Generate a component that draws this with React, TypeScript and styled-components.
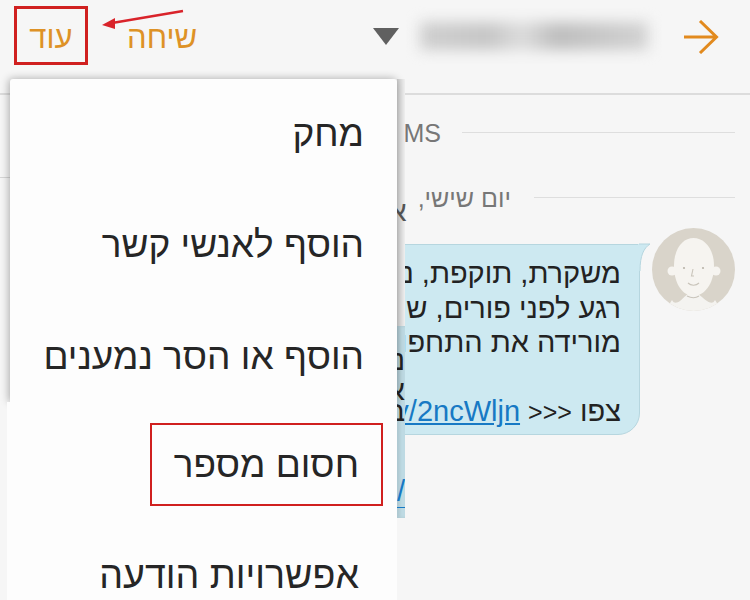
import React from "react";
import styled, { createGlobalStyle } from "styled-components";

const Global = createGlobalStyle`
  html, body { margin: 0; padding: 0; background: #f6f6f6; }
  body { width: 750px; height: 600px; overflow: hidden; font-family: "Liberation Sans", "DejaVu Sans", sans-serif; }
`;

const Screen = styled.div`
  position: relative;
  width: 750px;
  height: 600px;
  overflow: hidden;
  background: #f6f6f6;
`;

const Header = styled.header`
  height: 95px;
  box-sizing: border-box;
  border-bottom: 2px solid #dcdcdc;
  display: flex;
  align-items: flex-start;
  direction: ltr;
  padding: 6px 30px 0 14px;
  background: #f6f6f6;
`;

const HeaderAction = styled.div<{ $boxed?: boolean }>`
  box-sizing: border-box;
  width: ${(p) => (p.$boxed ? "74px" : "auto")};
  height: 59px;
  display: flex;
  align-items: center;
  justify-content: center;
  margin-left: ${(p) => (p.$boxed ? "0" : "39px")};
  padding-top: ${(p) => (p.$boxed ? "4px" : "3px")};
  border: ${(p) => (p.$boxed ? "3px solid #d0201f" : "none")};
  color: #de9226;
  font-size: 31px;
  line-height: 1;
`;

const Caret = styled.div`
  width: 0;
  height: 0;
  margin: 22px 0 0 176px;
  border-left: 13px solid transparent;
  border-right: 13px solid transparent;
  border-top: 17px solid #606060;
`;

const BlurName = styled.div`
  width: 228px;
  height: 28px;
  margin: 16px 0 0 21px;
  background: linear-gradient(90deg, #cfcfcf, #c6c6c6 30%, #dcdcdc 45%, #bebebe 60%, #d2d2d2);
  filter: blur(7px);
`;

const BackArrow = styled.svg`
  width: 36px;
  height: 34px;
  margin: 14px 0 0 35px;
  flex: none;
`;

const Chat = styled.main`
  display: flex;
  flex-direction: column;
  align-items: stretch;
  padding: 26px 15px 0 0;
`;

const DateRow = styled.div`
  display: flex;
  align-items: center;
  height: 24px;
  direction: ltr;
`;

const DateLabel = styled.span<{ $width: number }>`
  flex: none;
  width: ${(p) => p.$width}px;
  direction: rtl;
  text-align: right;
  color: #777;
  font-size: 25px;
  white-space: nowrap;
`;

const DateLine = styled.span<{ $inset: number }>`
  flex: 1;
  height: 1px;
  margin: -2px 0 0 ${(p) => p.$inset}px;
  background: #dedede;
`;

const Divider = styled.div`
  width: 405px;
  height: 1px;
  margin: 32px 0 8px;
  background: #d6d6d6;
`;

const Message = styled.div`
  display: flex;
  direction: ltr;
  align-items: flex-start;
  justify-content: flex-end;
  margin-top: 18px;
`;

const Bubble = styled.div`
  box-sizing: border-box;
  width: 440px;
  height: 191px;
  margin: 16px 12px 0 0;
  padding: 11px 18px 0 0;
  background: #cde9f1;
  border: 1px solid #b6d6df;
  border-radius: 0 0 22px 0;
  direction: rtl;
  color: #222;
  font-size: 29px;
  line-height: 34.5px;
  white-space: nowrap;
  overflow: hidden;
`;

const Chevrons = styled.span`
  font-size: 25px;
`;

const Tail = styled.svg`
  position: absolute;
  left: 638px;
  top: 243px;
`;

const BubbleLink = styled.a`
  color: #1779c4;
  text-decoration: underline;
  direction: ltr;
  unicode-bidi: embed;
`;

const Avatar = styled.svg`
  flex: none;
  width: 83px;
  height: 83px;
`;

const RedArrow = styled.svg`
  position: absolute;
  left: 100px;
  top: 8px;
`;

const ShadowStrip = styled.div`
  position: absolute;
  left: 397px;
  top: 79px;
  width: 8px;
  height: 247px;
  background: linear-gradient(90deg, #cfcfcf, #efefef);
`;

const PeekGlyph = styled.span`
  position: absolute;
  left: 389px;
  top: 198px;
  color: #555;
  font-size: 28px;
  line-height: 28px;
`;

const Menu = styled.div`
  position: absolute;
  left: 10px;
  top: 79px;
  width: 387px;
  height: 323px;
  background: #fdfdfd;
  border-radius: 3px 3px 0 0;
  box-shadow: -1px 0 9px rgba(0, 0, 0, 0.32);
  direction: rtl;
`;

const MenuLower = styled.div`
  position: absolute;
  left: 7px;
  top: 402px;
  width: 390px;
  height: 198px;
  overflow: hidden;
  background: #fdfdfd;
  direction: rtl;
`;

const MenuItem = styled.div<{ $right: number; $height: number; $size?: number }>`
  height: ${(p) => p.$height}px;
  display: flex;
  align-items: center;
  padding-right: ${(p) => p.$right}px;
  color: #262626;
  font-size: ${(p) => p.$size ?? 37}px;
  white-space: nowrap;
`;

const BlockBox = styled.div`
  position: absolute;
  left: 150px;
  top: 423px;
  width: 233px;
  height: 83px;
  box-sizing: border-box;
  border: 2px solid #d0201f;
`;

const Strip = styled.div`
  position: absolute;
  left: 397px;
  top: 326px;
  width: 8px;
  height: 192px;
  background: #bedae3;
  overflow: hidden;
  box-shadow: inset 3px 0 3px rgba(0, 0, 0, 0.08);
  direction: rtl;
  font-size: 29px;
`;

const StripText = styled.div<{ $h: number }>`
  height: ${(p) => p.$h}px;
  line-height: ${(p) => p.$h}px;
  color: #222;
  white-space: nowrap;
`;

const StripLink = styled.div`
  margin-top: 58px;
  height: 32px;
  line-height: 32px;
  color: #1779c4;
  border-bottom: 1px solid #1779c4;
  direction: ltr;
`;

export default function App() {
  return (
    <Screen>
      <Global />
      <Header>
        <HeaderAction $boxed>עוד</HeaderAction>
        <HeaderAction>שיחה</HeaderAction>
        <Caret />
        <BlurName />
        <BackArrow viewBox="0 0 36 34" fill="none" stroke="#e28a1e" strokeWidth="3">
          <path d="M1 17H34M17 1L33.5 17L17 33" />
        </BackArrow>
      </Header>
      <Chat>
        <DateRow>
          <DateLabel $width={441}>SMS</DateLabel>
          <DateLine $inset={21} />
        </DateRow>
        <Divider />
        <DateRow>
          <DateLabel $width={511}>יום שישי,</DateLabel>
          <DateLine $inset={23} />
        </DateRow>
        <Message>
          <Bubble>
            משקרת, תוקפת, נעלמת
            <br />
            רגע לפני פורים, שווה
            <br />
            מורידה את התחפושת
            <br />
            <br />
            צפו <Chevrons>{"<<<"}</Chevrons> <BubbleLink href="#">http://bit.ly/2ncWljn</BubbleLink>
          </Bubble>
          <Avatar viewBox="0 0 83 83">
            <defs>
              <clipPath id="round">
                <circle cx="41.5" cy="41.5" r="41.5" />
              </clipPath>
            </defs>
            <circle cx="41.5" cy="41.5" r="41.5" fill="#d9d4ca" />
            <g clipPath="url(#round)">
              <path d="M20 72C22 76 25 75 28 73C32 70 36 64 41 64C46 64 50 70 55 73C58 75 61 76 63 72L70 83H13Z" fill="#f4f3f0" />
              <circle cx="20" cy="43" r="4.5" fill="#f6f4f0" />
              <circle cx="64" cy="43" r="4.5" fill="#f6f4f0" />
              <path d="M22 38C22 20 31 10 41.5 10C52 10 62 20 62 38C62 56 52 68 41.5 68C31 68 22 56 22 38Z" fill="#f6f4f0" />
            </g>
            <circle cx="32" cy="40" r="1.1" fill="#b9b4aa" />
            <circle cx="51" cy="40" r="1.1" fill="#b9b4aa" />
            <path d="M41 41L39.5 48H42M36 55C39 58 44 58 47 55M35 68C39 70 44 70 47 68" fill="none" stroke="#c9c4ba" strokeWidth="1.1" />
          </Avatar>
        </Message>
      </Chat>
      <Tail width="14" height="28" viewBox="0 0 14 28">
        <path d="M0 1H12C6 5 2 12 2 28H0Z" fill="#cde9f1" />
        <path d="M1 1H12C6 5 2 12 2 28" fill="none" stroke="#b6d6df" />
      </Tail>
      <RedArrow width="86" height="22" viewBox="0 0 86 22">
        <path d="M83 3L12 15" stroke="#d9232a" strokeWidth="2.4" />
        <path d="M2 17L15 10L15 21Z" fill="#d9232a" />
      </RedArrow>
      <ShadowStrip />
      <PeekGlyph>א</PeekGlyph>
      <Strip>
        <StripText $h={19} />
        <StripText $h={30}>נב</StripText>
        <StripText $h={30}>אב</StripText>
        <StripText $h={12}>ב</StripText>
        <StripLink>/</StripLink>
      </Strip>
      <Menu>
        <MenuItem $right={33} $height={110}>מחק</MenuItem>
        <MenuItem $right={33} $height={112}>הוסף לאנשי קשר</MenuItem>
        <MenuItem $right={33} $height={112}>הוסף או הסר נמענים</MenuItem>
      </Menu>
      <MenuLower>
        <MenuItem $right={38} $height={126}>חסום מספר</MenuItem>
        <MenuItem $right={38} $height={94} $size={37.6}>אפשרויות הודעה</MenuItem>
      </MenuLower>
      <BlockBox />
    </Screen>
  );
}
